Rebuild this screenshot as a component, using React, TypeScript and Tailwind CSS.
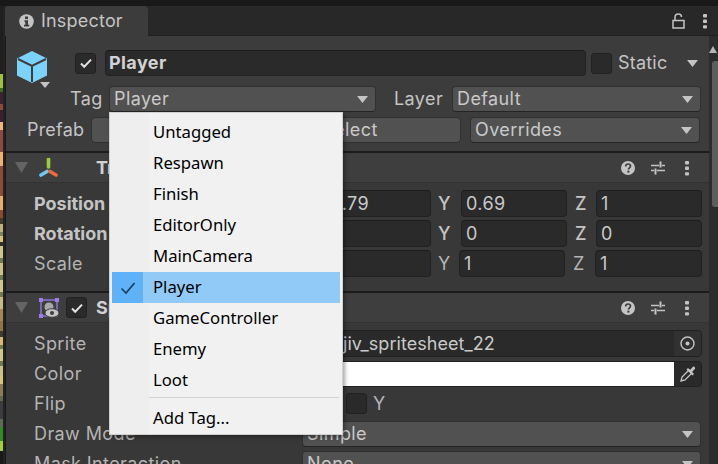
import { ReactNode } from 'react'

const inter = "font-['Inter',sans-serif]"

const sceneBands: [number, string][] = [
  [68, '#1f1f1f'],
  [14, '#9cc23c'],
  [4, '#3d6b1f'],
  [12, '#3a2230'],
  [6, '#8a4a3f'],
  [12, '#3a1f2e'],
  [8, '#ecb877'],
  [22, '#8a4a40'],
  [14, '#ecb26e'],
  [30, '#8a4c36'],
  [14, '#e6ad6c'],
  [8, '#8b4a30'],
  [6, '#3e3a2c'],
  [8, '#b9b27a'],
  [4, '#7e8458'],
  [6, '#d8c27c'],
  [4, '#2f3326'],
  [12, '#cfc48a'],
  [5, '#6f7a4e'],
  [12, '#c9c185'],
  [5, '#6f7a4e'],
  [12, '#cfc48a'],
  [5, '#6f7a4e'],
  [12, '#c4bc80'],
  [12, '#a58653'],
  [10, '#8f7446'],
  [6, '#3d3d2e'],
  [8, '#d9b873'],
  [4, '#6f7a4e'],
  [12, '#cfc48a'],
  [5, '#6f7a4e'],
  [10, '#c9c185'],
  [8, '#d8c27c'],
  [12, '#8a7a55'],
  [5, '#62684a'],
  [18, '#3d3a40'],
  [8, '#5d6a58'],
  [14, '#2f8a22'],
  [10, '#a7cc3a'],
]

const menuItems = ['Untagged', 'Respawn', 'Finish', 'EditorOnly', 'MainCamera', 'Player', 'GameController', 'Enemy', 'Loot']

function Arrow({ color = '#c4c4c4' }: { color?: string }) {
  return (
    <svg width="11" height="7" viewBox="0 0 11 7" className="shrink-0">
      <path d="M0 0h11L5.500 7z" fill={color} />
    </svg>
  )
}

function Kebab() {
  return (
    <svg width="4" height="16" viewBox="0 0 4 16" className="shrink-0">
      <rect x="0" y="1" width="4" height="3.400" rx="1" fill="#c4c4c4" />
      <rect x="0" y="6.600" width="4" height="3.400" rx="1" fill="#c4c4c4" />
      <rect x="0" y="12.200" width="4" height="3.400" rx="1" fill="#c4c4c4" />
    </svg>
  )
}

function Check({ on = false }: { on?: boolean }) {
  return (
    <div className="w-[21px] h-[21px] shrink-0 rounded-[3px] bg-[#2a2a2a] border border-[#212121] flex items-center justify-center">
      {on && (
        <svg width="14" height="14" viewBox="0 0 14 14">
          <path d="M2 7.500l3.200 3.200L12 3.600" fill="none" stroke="#e2e2e2" strokeWidth="2" />
        </svg>
      )}
    </div>
  )
}

function Dropdown({ label, className }: { label: string; className: string }) {
  return (
    <div
      className={`h-[26px] shrink-0 rounded-[4px] bg-[#515151] border border-[#303030] border-b-[#242424] pl-[4px] pr-[7px] flex items-center justify-between tracking-[0.4px] text-[#c9c9c9] ${className}`}
    >
      <span className="truncate leading-[24px]">{label}</span>
      <Arrow />
    </div>
  )
}

function Field({ value, className, inset = 4 }: { value: string; className: string; inset?: number }) {
  return (
    <div
      className={`h-[27px] shrink-0 rounded-[4px] bg-[#2a2a2a] border border-[#212121] border-t-[#1c1c1c] flex items-center tracking-[0.4px] text-[#c9c9c9] ${className}`}
      style={{ paddingLeft: inset }}
    >
      {value}
    </div>
  )
}

function VectorRow({
  label,
  bold,
  x,
  y,
  z,
  shift,
  xInset,
}: {
  label: string
  bold?: boolean
  x: string
  y: string
  z: string
  shift?: boolean
  xInset?: number
}) {
  return (
    <div className="h-[27px] flex items-center">
      <span className={`w-[296px] shrink-0 pl-[28px] ${bold ? 'font-bold text-[#c4c4c4]' : 'text-[#b4b4b4] tracking-[0.4px]'}`}>{label}</span>
      <span className="w-[23px] shrink-0">X</span>
      <Field value={x} className="w-[106px]" inset={xInset} />
      <span className={`shrink-0 pl-[7px] ${shift ? 'w-[28px] text-[#b4b4b4]' : 'w-[30px] font-medium'}`}>Y</span>
      <Field value={y} className="w-[106px]" />
      <span className={`shrink-0 pl-[8px] ${shift ? 'w-[30px] text-[#b4b4b4]' : 'w-[29px] font-medium'}`}>Z</span>
      <Field value={z} className={shift ? 'w-[107px]' : 'w-[106px]'} />
    </div>
  )
}

function ComponentHeader({ icon, children }: { icon: ReactNode; children: ReactNode }) {
  return (
    <div className="h-[30px] shrink-0 bg-[#3e3e3e] border-b border-[#323232] flex items-center pl-[9px]">
      <svg width="13" height="11" viewBox="0 0 13 11" className="shrink-0">
        <path d="M0 0h13L6.500 11z" fill="#646464" />
      </svg>
      {icon}
      {children}
      <div className="ml-auto flex items-center pr-[20px]">
        <svg width="14" height="14" viewBox="0 0 14 14" className="shrink-0">
          <circle cx="7" cy="7" r="7" fill="#c4c4c4" />
          <path d="M4.600 5.400C4.700 3.900 5.700 3 7.100 3c1.400 0 2.400.9 2.400 2.100 0 1.800-2 1.800-2 3.400" fill="none" stroke="#3e3e3e" strokeWidth="1.700" />
          <rect x="6.400" y="9.600" width="2" height="2" fill="#3e3e3e" />
        </svg>
        <svg width="14" height="14" viewBox="0 0 14 14" className="shrink-0 ml-[16px]">
          <path d="M0 4.500h8M11 4.500h3M0 9.500h3M6 9.500h8" stroke="#c4c4c4" strokeWidth="1.300" />
          <rect x="8.500" y="0.500" width="2" height="6" fill="#c4c4c4" />
          <rect x="3.500" y="7.500" width="2" height="6" fill="#c4c4c4" />
        </svg>
        <div className="ml-[20px] flex">
          <Kebab />
        </div>
      </div>
    </div>
  )
}

function PropLabel({ children }: { children: ReactNode }) {
  return <span className="w-[296px] shrink-0 pl-[28px] tracking-[0.4px] text-[#b4b4b4]">{children}</span>
}

export default function App() {
  return (
    <div className={`w-[718px] h-[464px] overflow-hidden relative bg-[#191919] flex flex-col text-[18px] leading-none text-[#c4c4c4] ${inter}`}>
      <div className="h-[6px] shrink-0" />
      <div className="flex-1 min-h-0 flex">
        <div className="w-[3px] shrink-0 flex flex-col">
          {sceneBands.map(([height, color], i) => (
            <div key={i} className="shrink-0" style={{ height, backgroundColor: color }} />
          ))}
        </div>
        <div className="w-[2px] shrink-0 bg-[#232323]" />

        <div className="flex-1 min-w-0 flex flex-col">
          {/* tab strip */}
          <div className="h-[30px] shrink-0 bg-[#282828] border-b border-[#1f1f1f] flex items-stretch pr-[11px]">
            <div className="w-[143px] h-[30px] rounded-t-[4px] bg-[#3c3c3c] flex items-center pl-[14px] gap-[7px]">
              <svg width="15" height="15" viewBox="0 0 15 15" className="shrink-0">
                <circle cx="7.500" cy="7.500" r="7.300" fill="#c4c4c4" />
                <rect x="6" y="2.500" width="3" height="2.600" fill="#3c3c3c" />
                <path d="M5.500 6.300H9v4.500h1.200V12.500H5V10.800h1.300V8H5.500z" fill="#3c3c3c" />
              </svg>
              <span className="tracking-[0.2px]">Inspector</span>
            </div>
            <div className="ml-auto flex items-center gap-[18px]">
              <svg width="13" height="16" viewBox="0 0 13 16" className="shrink-0">
                <path d="M3 7V4.300C3 2.400 4.400 1 6.300 1s3.200 1.300 3.200 3" fill="none" stroke="#c4c4c4" strokeWidth="1.500" />
                <rect x="1" y="7.500" width="11" height="7.500" fill="none" stroke="#c4c4c4" strokeWidth="1.500" />
              </svg>
              <Kebab />
            </div>
          </div>

          <div className="flex-1 min-h-0 flex">
            <div className="flex-1 min-w-0 ml-px flex flex-col bg-[#383838]">
              {/* game object header */}
              <div className="h-[117px] shrink-0 bg-[#3c3c3c] border-b-2 border-[#1c1c1c] flex flex-col pt-[14px]">
                <div className="h-[26px] flex items-center">
                  <svg width="34" height="42" viewBox="0 0 34 42" className="shrink-0 ml-[11px] self-start mt-px">
                    <path d="M15 0l15 7.500v17L15 32 0 24.500v-17z" fill="#7bd2fc" />
                    <path d="M1 8l14 7 14-7M15 15v16" fill="none" stroke="#3c3c3c" strokeWidth="2" />
                    <path d="M23 31h10l-5 6z" fill="#c4c4c4" />
                  </svg>
                  <div className="ml-[24px]">
                    <Check on />
                  </div>
                  <div className="ml-[9px] h-[26px] w-[481px] shrink-0 rounded-[4px] bg-[#2a2a2a] border border-[#212121] border-t-[#1a1a1a] pl-[3px] flex items-center font-bold tracking-[0.4px] text-[#d2d2d2]">
                    Player
                  </div>
                  <div className="ml-[5px]">
                    <Check />
                  </div>
                  <span className="ml-[6px] tracking-[0.2px]">Static</span>
                  <div className="ml-[20px]">
                    <Arrow />
                  </div>
                </div>

                <div className="h-[26px] mt-[10px] flex items-center">
                  <span className="w-[103px] pl-[64px] shrink-0 tracking-[0.4px]">Tag</span>
                  <Dropdown label="Player" className="w-[267px]" />
                  <span className="w-[76px] pl-[18px] shrink-0 tracking-[0.4px]">Layer</span>
                  <Dropdown label="Default" className="w-[249px]" />
                </div>

                <div className="h-[26px] mt-[5px] flex items-center">
                  <span className="w-[85px] pl-[21px] shrink-0 tracking-[0.2px]">Prefab</span>
                  <div className="h-[26px] w-[146px] shrink-0 rounded-[4px] bg-[#515151] border border-[#303030] flex items-center justify-center text-[#c9c9c9]">
                    Open
                  </div>
                  <div className="ml-[2px] h-[26px] w-[222px] shrink-0 rounded-[4px] bg-[#515151] border border-[#303030] flex items-center justify-center tracking-[0.4px] text-[#c9c9c9]">
                    Select
                  </div>
                  <Dropdown label="Overrides" className="ml-[9px] w-[230px]" />
                </div>
              </div>

              {/* transform */}
              <ComponentHeader
                icon={
                  <svg width="20" height="20" viewBox="0 0 20 20" className="shrink-0 ml-[11px]">
                    <path d="M9.500 1v8" stroke="#9ccc3c" strokeWidth="3.600" strokeLinecap="round" />
                    <path d="M2 17l6-3.500" stroke="#6cc8f4" strokeWidth="3.600" strokeLinecap="round" />
                    <path d="M17 17l-6-3.500" stroke="#ee6a3c" strokeWidth="3.600" strokeLinecap="round" />
                  </svg>
                }
              >
                <span className="ml-[37px] font-bold text-[#d2d2d2]">Transform</span>
              </ComponentHeader>
              <div className="h-[110px] shrink-0 flex flex-col gap-[3px] pt-[7px] border-b-2 border-[#1c1c1c]">
                <VectorRow label="Position" bold x="1.79" xInset={8} y="0.69" z="1" />
                <VectorRow label="Rotation" bold x="0" y="0" z="0" />
                <VectorRow label="Scale" x="1" y="1" z="1" shift />
              </div>

              {/* sprite renderer */}
              <ComponentHeader
                icon={
                  <svg width="22" height="22" viewBox="0 0 22 22" className="shrink-0 ml-[10px]">
                    <rect x="3" y="3" width="16" height="16" fill="none" stroke="#9b7fe8" strokeWidth="1.300" />
                    <rect x="1" y="1" width="4" height="4" fill="#9b7fe8" />
                    <rect x="17" y="1" width="4" height="4" fill="#9b7fe8" />
                    <rect x="1" y="17" width="4" height="4" fill="#9b7fe8" />
                    <circle cx="11" cy="10" r="4.500" fill="#a8a8a8" />
                    <ellipse cx="14" cy="16" rx="7" ry="4.300" fill="#c4c4c4" stroke="#3e3e3e" />
                    <circle cx="14" cy="16" r="2" fill="#3e3e3e" />
                  </svg>
                }
              >
                <div className="ml-[6px]">
                  <Check on />
                </div>
                <span className="ml-[9px] font-bold text-[#d2d2d2]">Sprite Renderer</span>
              </ComponentHeader>
              <div className="flex flex-col pt-[7px]">
                <div className="h-[27px] flex items-center">
                  <PropLabel>Sprite</PropLabel>
                  <div className="w-[400px] h-[27px] shrink-0 rounded-[4px] bg-[#2a2a2a] border border-[#212121] flex items-center justify-between overflow-hidden text-[#c9c9c9]">
                    <span className="pl-[40px] tracking-[0.05px]">jiv_spritesheet_22</span>
                    <div className="w-[27px] h-full bg-[#313131] flex items-center justify-center">
                      <svg width="15" height="15" viewBox="0 0 15 15">
                        <circle cx="7.500" cy="7.500" r="6.500" fill="none" stroke="#c4c4c4" strokeWidth="1.400" />
                        <circle cx="7.500" cy="7.500" r="2" fill="#c4c4c4" />
                      </svg>
                    </div>
                  </div>
                </div>
                <div className="h-[26px] mt-[4px] flex items-center">
                  <PropLabel>Color</PropLabel>
                  <div className="w-[400px] h-[26px] shrink-0 rounded-[4px] bg-[#2a2a2a] border border-[#212121] flex items-stretch overflow-hidden">
                    <div className="flex-1 bg-white" />
                    <div className="w-[27px] flex items-center justify-center">
                      <svg width="18" height="18" viewBox="0 0 18 18">
                        <path d="M2 16l1-4 7-7 3 3-7 7z" fill="none" stroke="#c4c4c4" strokeWidth="1.300" />
                        <path d="M9 3l2 2 3-3.200c1-.8 2.600 1 2 2L13 7l2 2-1.500 1.500-6-6z" fill="#c4c4c4" />
                      </svg>
                    </div>
                  </div>
                </div>
                <div className="h-[27px] mt-[3px] flex items-center">
                  <PropLabel>Flip</PropLabel>
                  <Check />
                  <span className="w-[23px] shrink-0 pl-[6px]">X</span>
                  <Check />
                  <span className="pl-[6px] text-[#b4b4b4]">Y</span>
                </div>
                <div className="h-[26px] mt-[4px] flex items-center">
                  <PropLabel>Draw Mode</PropLabel>
                  <Dropdown label="Simple" className="w-[399px]" />
                </div>
                <div className="h-[26px] mt-[4px] flex items-center">
                  <PropLabel>Mask Interaction</PropLabel>
                  <Dropdown label="None" className="w-[399px]" />
                </div>
              </div>
            </div>

            {/* scrollbar */}
            <div className="w-[9px] shrink-0 bg-[#2c2c2c] flex flex-col items-end">
              <svg width="8" height="7" viewBox="0 0 8 7" className="mt-[10px] mr-px shrink-0">
                <path d="M0 7h8L4 0z" fill="#b4b4b4" />
              </svg>
              <div className="mt-[8px] w-[6px] h-[146px] rounded-l-[3px] bg-[#5d5d5d]" />
            </div>
          </div>
        </div>
      </div>

      {/* tag popup */}
      <div className="absolute left-[109px] top-[112px] w-[234px] h-[323px] bg-[#f1f1f1] border border-[#d0d0d0] shadow-[2px_2px_4px_rgba(0,0,0,0.35)] pt-[4px] font-['Noto_Sans',sans-serif] text-[16.7px] text-black">
        <div className="absolute left-0 top-0 bottom-0 w-[39px] bg-[#eeeeee]" />
        <div className="relative flex flex-col">
          {menuItems.map((item) => {
            const selected = item === 'Player'
            return (
              <div key={item} className={`h-[31px] mx-[2px] flex items-center ${selected ? 'bg-[#91c9f7]' : ''}`}>
                <div className={`w-[31px] h-full shrink-0 flex items-center justify-center ${selected ? 'bg-[#5fb2f8]' : ''}`}>
                  {selected && (
                    <svg width="16" height="14" viewBox="0 0 16 14">
                      <path d="M1.500 7.500l4.500 4.500L14.500 2" fill="none" stroke="#1a3c5c" strokeWidth="1.600" />
                    </svg>
                  )}
                </div>
                <span className="ml-[10px]">{item}</span>
              </div>
            )
          })}
          <div className="h-px ml-[39px] mr-[3px] mt-[1px] bg-[#d4d4d4]" />
          <div className="h-[40px] mx-[2px] flex items-center pl-[41px]">Add Tag...</div>
        </div>
      </div>
    </div>
  )
}
